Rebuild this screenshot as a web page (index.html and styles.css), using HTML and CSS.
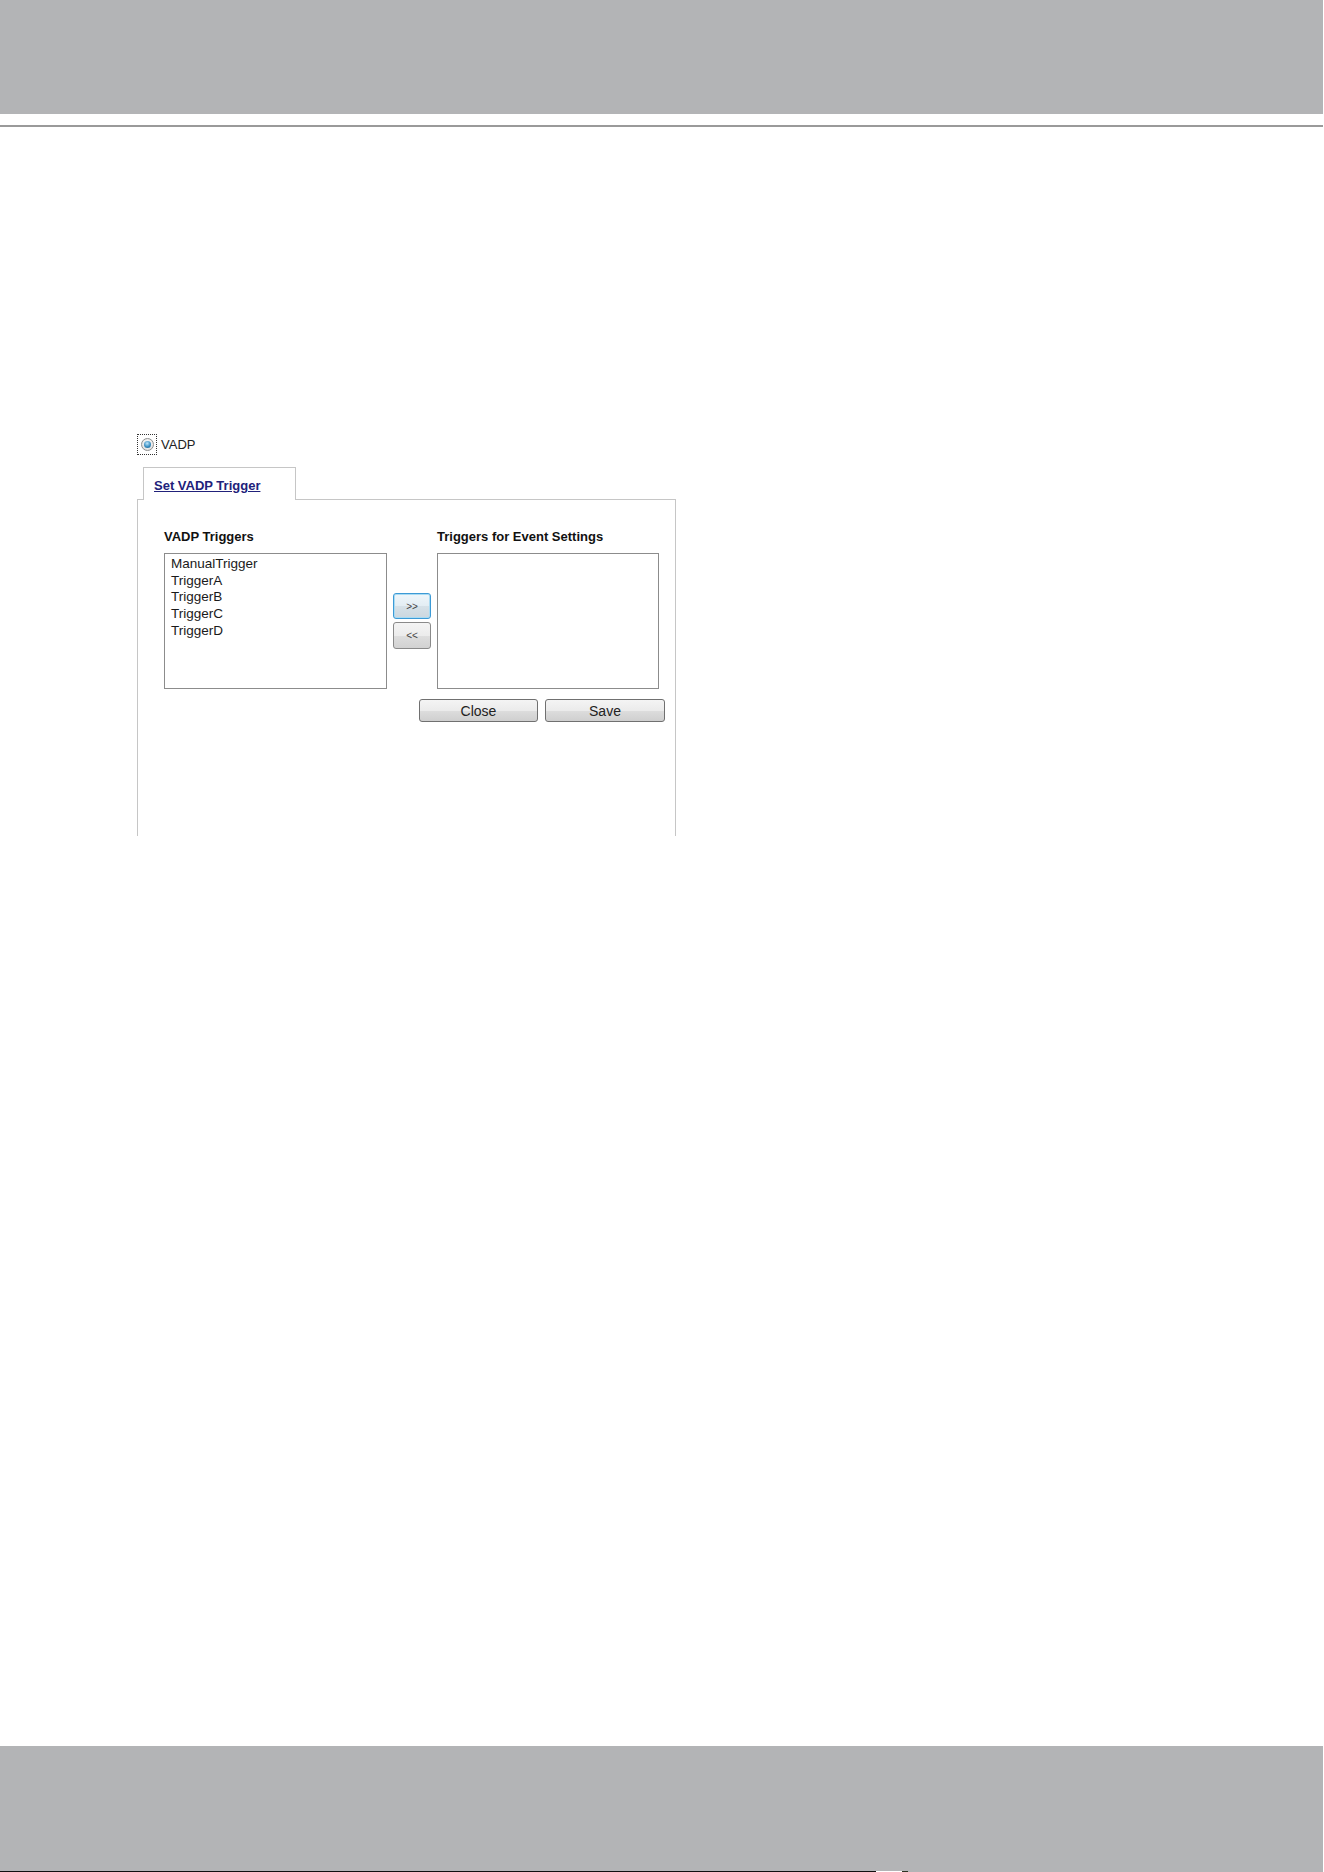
FILE: index.html
```html
<!DOCTYPE html>
<html lang="en">
<head>
    <meta charset="UTF-8">
    <meta name="viewport" content="width=device-width, initial-scale=1.0">
    <title>VADP Trigger</title>
    <link rel="stylesheet" href="styles.css">
</head>
<body>
    <div class="page">
        <div class="header"></div>
        <div class="rule"></div>

        <div class="main">
            <!-- event source choice -->
            <div class="source">
                <span class="focus-box"><span class="radio checked"></span></span>
                <span class="source-label">VADP</span>
            </div>

            <div class="tabs">
                <div class="tab"><a href="#" class="tab-link">Set VADP Trigger</a></div>
            </div>

            <div class="panel">
                <div class="lists">
                    <h3 class="list-title">VADP Triggers</h3>
                    <span></span>
                    <h3 class="list-title">Triggers for Event Settings</h3>

                    <ul class="listbox">
                        <li>ManualTrigger</li>
                        <li>TriggerA</li>
                        <li>TriggerB</li>
                        <li>TriggerC</li>
                        <li>TriggerD</li>
                    </ul>
                    <div class="movers">
                        <button type="button" class="mover focused">&gt;&gt;</button>
                        <button type="button" class="mover">&lt;&lt;</button>
                    </div>
                    <ul class="listbox"></ul>
                </div>

                <div class="actions">
                    <button type="button" class="btn btn-close">Close</button>
                    <button type="button" class="btn btn-save">Save</button>
                </div>
            </div>
        </div>

        <div class="footer">
            <div class="footer-edge">
                <span class="edge-dark"></span>
                <span class="edge-gap"></span>
                <span class="edge-mark"></span>
            </div>
        </div>
    </div>
</body>
</html>
```

FILE: styles.css
```css
body {
    margin: 0;
    padding: 0;
    background: #fff;
    font-family: "Liberation Sans", Arial, sans-serif;
    color: #222;
}
.page {
    height: 1872px;
    display: flex;
    flex-direction: column;
}
.header {
    height: 114px;
    margin-right: 1px;
    background: #b3b4b6;
}
.rule {
    height: 2px;
    margin-top: 11px;
    margin-right: 1px;
    background: #9a9a9a;
}
.main {
    flex: 1;
    padding: 307px 0 0 137px;
}

/* radio row */
.source {
    display: flex;
    align-items: center;
    height: 21px;
}
.focus-box {
    width: 20px;
    height: 21px;
    box-sizing: border-box;
    border: 1px dotted #333;
    display: flex;
    align-items: center;
    justify-content: center;
}
.radio {
    width: 13px;
    height: 13px;
    box-sizing: border-box;
    border-radius: 50%;
    border: 1px solid #8e8f8f;
    background: radial-gradient(circle at 50% 40%, #ffffff, #d8d8d8);
    display: flex;
    align-items: center;
    justify-content: center;
}
.radio.checked::after {
    content: "";
    width: 7px;
    height: 7px;
    border-radius: 50%;
    background: radial-gradient(circle at 45% 35%, #bfe6fb, #3a8fc2 55%, #1c5a82);
}
.source-label {
    margin-left: 4px;
    font-size: 13px;
}

/* tab */
.tabs {
    margin-top: 12px;
    padding-left: 6px;
    display: flex;
}
.tab {
    width: 153px;
    height: 33px;
    box-sizing: border-box;
    border: 1px solid #c6c6c6;
    border-bottom: none;
    background: #fff;
    padding: 8px 0 0 10px;
    margin-bottom: -1px;
    position: relative;
    z-index: 1;
}
.tab-link {
    font-size: 13px;
    line-height: 15px;
    font-weight: bold;
    color: #21217a;
    text-decoration: underline;
}
.panel {
    width: 539px;
    height: 337px;
    box-sizing: border-box;
    border: 1px solid #c6c6c6;
    border-bottom: none;
    padding: 29px 0 0 26px;
}

/* two list boxes with the move buttons between them */
.lists {
    display: grid;
    grid-template-columns: 223px 38px 222px;
    column-gap: 6px;
}
.list-title {
    margin: 0 0 9px;
    font-size: 13px;
    line-height: 15px;
    font-weight: bold;
    color: #111;
    white-space: nowrap;
}
.listbox {
    list-style: none;
    margin: 0;
    height: 136px;
    box-sizing: border-box;
    border: 1px solid #8c8c8c;
    padding: 2px 6px;
    font-size: 13.5px;
    line-height: 16.7px;
    color: #1a1a1a;
}
.movers {
    display: flex;
    flex-direction: column;
    justify-content: center;
    gap: 3px;
}
.mover {
    width: 38px;
    height: 27px;
    padding: 0;
    border: 1px solid #8a8a8a;
    border-radius: 3px;
    background: linear-gradient(#f4f4f4, #ececec 50%, #dedede 51%, #d2d2d2);
    font-family: "Liberation Sans", Arial, sans-serif;
    font-size: 10px;
    color: #444;
}
.mover.focused {
    height: 26px;
    border-color: #3c9ad6;
    box-shadow: inset 0 0 0 1px #a9dbf3;
    background: linear-gradient(#eef6fb, #e3edf3 50%, #d6e1e8 51%, #ccd7df);
}

/* bottom buttons */
.actions {
    display: flex;
    gap: 7px;
    margin-top: 10px;
    padding-left: 255px;
}
.btn {
    height: 23px;
    padding: 0;
    border: 1px solid #707070;
    border-radius: 3px;
    background: linear-gradient(#f4f4f4, #ebebeb 50%, #dddddd 51%, #cfcfcf);
    font-family: "Liberation Sans", Arial, sans-serif;
    font-size: 14px;
    color: #222;
}
.btn-close {
    width: 119px;
}
.btn-save {
    width: 120px;
}

.footer {
    height: 126px;
    margin-right: 1px;
    background: #b3b4b6;
    display: flex;
    align-items: flex-end;
}
.footer-edge {
    display: flex;
    height: 1px;
}
.edge-dark {
    width: 876px;
    background: #111;
}
.edge-gap {
    width: 26px;
    background: #fff;
}
.edge-mark {
    width: 6px;
    background: #2c3324;
}
```
